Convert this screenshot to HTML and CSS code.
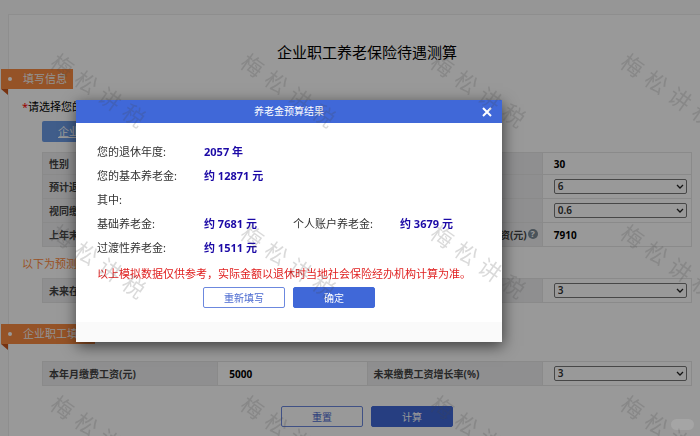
FILE: index.html
```html
<!DOCTYPE html>
<html lang="zh-CN">
<head>
    <meta charset="UTF-8">
    <meta name="viewport" content="width=device-width, initial-scale=1.0">
    <title>企业职工养老保险待遇测算</title>
    <link rel="stylesheet" href="styles.css">
</head>
<body>
    <main class="panel">
        <h1 class="page-title">企业职工养老保险待遇测算</h1>

        <h2 class="ribbon">填写信息</h2>
        <p class="choose"><span class="star">*</span>请选择您的</p>
        <a class="tab" href="#">企业职工</a>

        <!-- 基本信息 -->
        <table class="info">
            <tr class="short">
                <th>性别</th>
                <td></td>
                <th></th>
                <td>30</td>
            </tr>
            <tr>
                <th>预计退休</th>
                <td></td>
                <th></th>
                <td>
                    <div class="select-box">
                        <select aria-label="预计退休"><option>6</option></select>
                        <svg viewBox="0 0 8 6"><path d="M1 1l3 3 3-3"/></svg>
                    </div>
                </td>
            </tr>
            <tr>
                <th>视同缴费</th>
                <td></td>
                <th></th>
                <td>
                    <div class="select-box">
                        <select aria-label="视同缴费"><option>0.6</option></select>
                        <svg viewBox="0 0 8 6"><path d="M1 1l3 3 3-3"/></svg>
                    </div>
                </td>
            </tr>
            <tr>
                <th>上年末</th>
                <td></td>
                <th class="with-help">工资(元)<span class="help">?</span></th>
                <td>7910</td>
            </tr>
        </table>

        <p class="forecast">以下为预测</p>
        <table class="info">
            <tr>
                <th>未来在</th>
                <td></td>
                <th></th>
                <td>
                    <div class="select-box">
                        <select aria-label="未来"><option>3</option></select>
                        <svg viewBox="0 0 8 6"><path d="M1 1l3 3 3-3"/></svg>
                    </div>
                </td>
            </tr>
        </table>

        <h2 class="ribbon ribbon-second">企业职工填写</h2>
        <table class="info">
            <tr>
                <th>本年月缴费工资(元)</th>
                <td>5000</td>
                <th><label for="rate">未来缴费工资增长率(%)</label></th>
                <td>
                    <div class="select-box">
                        <select id="rate"><option>3</option></select>
                        <svg viewBox="0 0 8 6"><path d="M1 1l3 3 3-3"/></svg>
                    </div>
                </td>
            </tr>
        </table>

        <div class="buttons">
            <button class="btn" type="button">重置</button>
            <button class="btn btn-primary" type="button">计算</button>
        </div>
    </main>

    <div class="shade"></div>

    <!-- 结果弹窗 -->
    <section class="modal" role="dialog" aria-labelledby="modalTitle">
        <header class="modal-header">
            <h2 class="modal-title" id="modalTitle">养老金预算结果</h2>
            <button class="close" type="button" aria-label="关闭">
                <svg viewBox="0 0 10 10"><path d="M1 1l8 8M9 1l-8 8"/></svg>
            </button>
        </header>
        <div class="modal-body">
            <dl class="result">
                <dt>您的退休年度:</dt>
                <dd class="wide">2057 年</dd>
                <dt>您的基本养老金:</dt>
                <dd class="wide">约 12871 元</dd>
                <dt class="full">其中:</dt>
                <dt>基础养老金:</dt>
                <dd>约 7681 元</dd>
                <dt>个人账户养老金:</dt>
                <dd>约 3679 元</dd>
                <dt>过渡性养老金:</dt>
                <dd class="wide">约 1511 元</dd>
            </dl>
            <p class="notice">以上模拟数据仅供参考，实际金额以退休时当地社会保险经办机构计算为准。</p>
            <div class="buttons modal-buttons">
                <button class="btn" type="button">重新填写</button>
                <button class="btn btn-primary" type="button">确定</button>
            </div>
        </div>
        <footer class="modal-footer"></footer>
    </section>

    <!-- 水印 -->
    <div class="watermarks" aria-hidden="true">
        <div class="mark"><span>梅</span><span>松</span><span>讲</span><span>税</span></div>
        <div class="mark"><span>梅</span><span>松</span><span>讲</span><span>税</span></div>
        <div class="mark"><span>梅</span><span>松</span><span>讲</span><span>税</span></div>
        <div class="mark"><span>梅</span><span>松</span><span>讲</span><span>税</span></div>
        <div class="mark"><span>梅</span><span>松</span><span>讲</span><span>税</span></div>
        <div class="mark"><span>梅</span><span>松</span><span>讲</span><span>税</span></div>
        <div class="mark"><span>梅</span><span>松</span><span>讲</span><span>税</span></div>
        <div class="mark"><span>梅</span><span>松</span><span>讲</span><span>税</span></div>
        <div class="mark"><span>梅</span><span>松</span><span>讲</span><span>税</span></div>
        <div class="mark"><span>梅</span><span>松</span><span>讲</span><span>税</span></div>
        <div class="mark"><span>梅</span><span>松</span><span>讲</span><span>税</span></div>
        <div class="mark"><span>梅</span><span>松</span><span>讲</span><span>税</span></div>
    </div>
    <div class="pill"></div>
</body>
</html>
```
FILE: styles.css
```css
* {
    box-sizing: border-box;
}

body {
    margin: 0;
    min-height: 100vh;
    overflow: hidden;
    background: #fbfbfb;
    color: #000;
    font-family: "Noto Sans", "Noto Sans CJK SC", sans-serif;
    font-size: 11px;
    line-height: 16px;
}

h1, h2, p, dl, dd {
    margin: 0;
    font-weight: normal;
}

button, select {
    font-family: inherit;
}

/* 页面比窗口略宽，右侧边框在窗口外 */
.panel {
    margin: 14px -26px 0 8px;
    padding: 27px 33px 10px;
    border: 1px solid #ededed;
    border-bottom: 0;
    background: #fff;
}

.page-title {
    font-size: 15px;
    line-height: 20px;
    text-align: center;
}

/* 橙色标签 */
.ribbon {
    position: relative;
    width: fit-content;
    margin: 7px 0 0 -41px;
    padding: 0 6px 0 22px;
    background: #f88a42;
    color: #f4f4f4;
    font-size: 11px;
    line-height: 20px;
}

.ribbon::before {
    content: "";
    position: absolute;
    top: 8px;
    left: 7px;
    width: 4px;
    height: 4px;
    border-radius: 50%;
    background: #fff;
}

.ribbon::after {
    content: "";
    position: absolute;
    top: 100%;
    left: 0;
    border-top: 6px solid #c8561b;
    border-left: 7px solid transparent;
}

.ribbon-second {
    margin-top: 21px;
}

.choose {
    margin: 10px 0 6px -20px;
}

.star {
    color: #f00;
}

.tab {
    display: block;
    width: 82px;
    padding-left: 16px;
    border-radius: 2px;
    background: #6c9ce6;
    color: #fff;
    line-height: 21px;
}

/* 表格 */
.info {
    width: 100%;
    margin-top: 10px;
    border-collapse: collapse;
    table-layout: fixed;
    font-size: 10px;
}

.info th, .info td {
    height: 24px;
    padding: 0 4px 0 6px;
    border: 1px solid #e6e6e6;
    text-align: left;
    line-height: 14px;
}

.info .short th, .info .short td {
    height: 22px;
}

.info th {
    width: 27%;
    background: #eeeff0;
    color: #444;
}

.info td {
    padding-left: 11px;
    font-weight: bold;
}

.info .with-help {
    text-align: right;
}

.help {
    display: inline-block;
    width: 10px;
    height: 10px;
    margin-left: 1px;
    border-radius: 50%;
    background: #7c8a96;
    color: #fff;
    font-size: 9px;
    line-height: 10px;
    text-align: center;
    vertical-align: 2px;
}

.select-box {
    position: relative;
}

.select-box select {
    display: block;
    width: 100%;
    height: 15px;
    padding: 0 3px;
    border: 1px solid #777;
    border-radius: 2px;
    appearance: none;
    background: #fff;
    color: #333;
    font-size: 10px;
    font-weight: 600;
    line-height: 13px;
}

.select-box svg {
    position: absolute;
    top: 5px;
    right: 3px;
    width: 8px;
    height: 6px;
    fill: none;
    stroke: #222;
    stroke-width: 1.3;
    pointer-events: none;
}

.forecast {
    margin: 9px 0 0 -20px;
    color: #ff8a3c;
}

.forecast + .info {
    margin-top: 6px;
}

.ribbon-second + .info {
    margin-top: 17px;
}

/* 按钮 */
.buttons {
    display: flex;
    justify-content: center;
    gap: 8px;
    margin-top: 20px;
}

.btn {
    width: 82px;
    height: 21px;
    padding: 0;
    border: 1px solid #6c88de;
    border-radius: 2px;
    background: #fff;
    color: #4a69d0;
    font-size: 10px;
}

.btn-primary {
    border-color: #4068d8;
    background: #4068d8;
    color: #fff;
}

/* 遮罩 */
.shade {
    position: fixed;
    inset: 0;
    background: rgba(0, 0, 0, 0.4);
}

/* 弹窗 */
.modal {
    position: absolute;
    top: 100px;
    left: 76px;
    right: 198px;
    background: #fff;
    box-shadow: 1px 4px 14px rgba(0, 0, 0, 0.6);
}

.modal-header {
    display: flex;
    align-items: center;
    padding: 0 10px 0 20px;
    background: #4068d8;
    color: #fff;
}

.modal-title {
    flex: 1;
    font-size: 10px;
    line-height: 23px;
    text-align: center;
}

.close {
    width: 10px;
    height: 10px;
    padding: 0;
    border: 0;
    background: none;
}

.close svg {
    display: block;
    fill: none;
    stroke: #fff;
    stroke-width: 2;
}

.modal-body {
    padding: 17px 21px 14px;
}

.result {
    display: grid;
    grid-template-columns: 107px 89px 107px 1fr;
    color: #333;
    line-height: 24px;
}

.result dd {
    color: #1c0aa6;
    font-weight: bold;
}

.result .wide {
    grid-column: span 3;
}

.result .full {
    grid-column: span 4;
}

.notice {
    margin-top: 5px;
    color: #e02020;
    line-height: 18px;
    white-space: nowrap;
}

.modal-buttons {
    margin-top: 4px;
}

.modal-footer {
    height: 20px;
    background: #fafafa;
}

/* 水印 */
.watermarks {
    position: fixed;
    top: 74px;
    left: 44px;
    display: grid;
    grid-template-columns: repeat(4, 190px);
    grid-auto-rows: 171px;
    pointer-events: none;
}

.mark {
    display: flex;
    gap: 7px;
    width: 109px;
    height: 32px;
    transform: rotate(35deg);
    color: rgba(70, 70, 70, 0.2);
    font-size: 22px;
    line-height: 32px;
}

.pill {
    position: fixed;
    right: 6px;
    bottom: 6px;
    width: 23px;
    height: 11px;
    border-radius: 6px;
    background: rgba(255, 255, 255, 0.12);
}
```
